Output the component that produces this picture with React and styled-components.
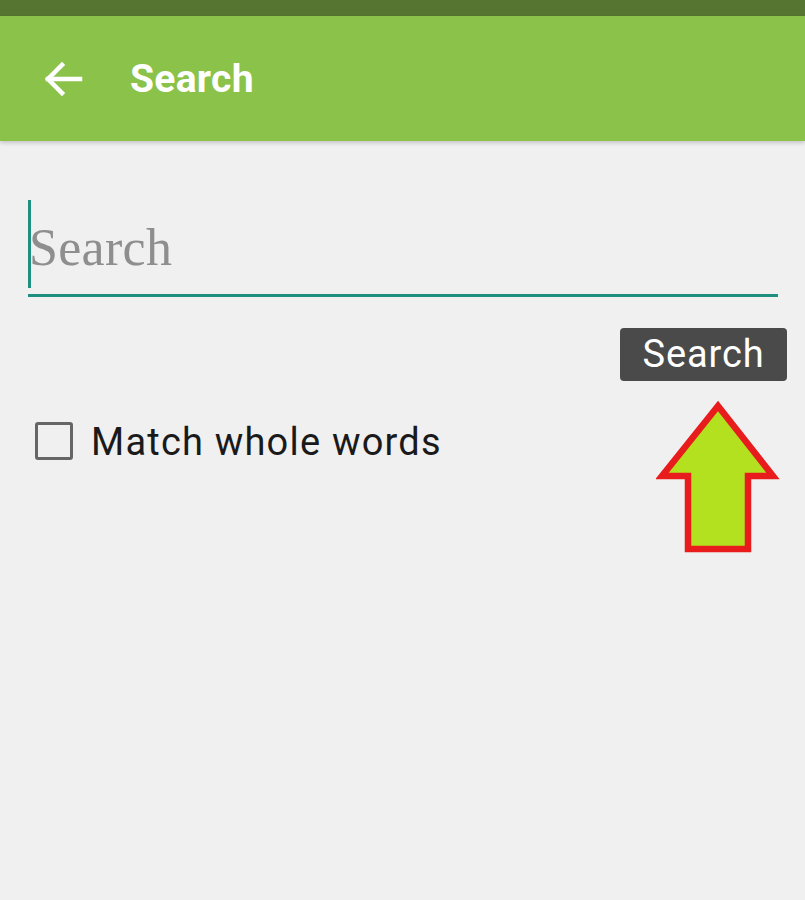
import React from "react";
import styled, { createGlobalStyle } from "styled-components";

const Global = createGlobalStyle`
  html, body { margin: 0; padding: 0; background: #f0f0f0; }
  body { font-family: Roboto, "Liberation Sans", sans-serif; }
  * { box-sizing: border-box; }
`;

const Screen = styled.div`
  position: relative;
  width: 805px;
  height: 900px;
  background: #f0f0f0;
  overflow: hidden;
`;

const StatusBar = styled.div`
  height: 16px;
  background: #557530;
`;

const Toolbar = styled.header`
  height: 125px;
  background: #8bc34a;
  display: flex;
  align-items: center;
  padding-left: 44px;
  gap: 46px;
  box-shadow: 0 2px 4px rgba(0, 0, 0, 0.18);
  position: relative;
  z-index: 1;
`;

const Title = styled.h1`
  margin: 0;
  color: #fff;
  font-family: Roboto, "Liberation Sans", sans-serif;
  font-weight: 700;
  font-size: 39px;
  letter-spacing: 0.3px;
  line-height: 1;
  margin-top: 2px;
`;

const Content = styled.main`
  display: flex;
  flex-direction: column;
  padding: 59px 27px 0 28px;
`;

const Field = styled.div`
  position: relative;
  border-bottom: 3px solid #1f8f7f;
  height: 97px;
`;

const Input = styled.input`
  width: 100%;
  height: 94px;
  border: none;
  background: transparent;
  outline: none;
  padding: 0 0 0 1px;
  font-family: "Liberation Serif", "DejaVu Serif", serif;
  font-size: 52px;
  letter-spacing: 0.3px;
  color: #333;
  &::placeholder { color: #8e8e8e; }
`;

const Caret = styled.span`
  position: absolute;
  left: 0;
  top: 0;
  width: 3px;
  height: 88px;
  background: #1f8f7f;
`;

const ButtonRow = styled.div`
  display: flex;
  justify-content: flex-end;
  margin-top: 31px;
  margin-right: -9px;
`;

const Button = styled.button`
  height: 53px;
  width: 167px;
  background: #4a4a4a;
  color: #fff;
  border: none;
  border-radius: 4px;
  font-family: Roboto, "Liberation Sans", sans-serif;
  font-size: 38px;
  letter-spacing: 0.9px;
  padding: 0;
  line-height: 53px;
`;

const CheckRow = styled.label`
  display: flex;
  align-items: center;
  gap: 18px;
  margin-top: 40px;
  margin-left: 7px;
`;

const Box = styled.span`
  width: 38px;
  height: 38px;
  border: 3.5px solid #666;
  border-radius: 3px;
  flex: none;
`;

const Label = styled.span`
  font-family: Roboto, "Liberation Sans", sans-serif;
  font-size: 38px;
  letter-spacing: 1.2px;
  color: #1a1a1a;
  line-height: 1;
  margin-top: 2px;
`;

const Pointer = styled.svg`
  position: absolute;
  left: 656px;
  top: 400px;
`;

export default function App() {
  return (
    <>
      <Global />
      <Screen>
        <StatusBar />
        <Toolbar>
          <svg width="40" height="36" viewBox="0 0 40 36" fill="none" stroke="#fff" strokeWidth="4.5" strokeLinecap="square">
            <path d="M4 18 H36" />
            <path d="M18 4 L4 18 L18 32" strokeLinejoin="miter" />
          </svg>
          <Title>Search</Title>
        </Toolbar>
        <Content>
          <Field>
            <Input placeholder="Search" readOnly />
            <Caret />
          </Field>
          <ButtonRow>
            <Button>Search</Button>
          </ButtonRow>
          <CheckRow>
            <Box />
            <Label>Match whole words</Label>
          </CheckRow>
        </Content>
        <Pointer width="125" height="160" viewBox="0 0 125 160">
          <polygon
            points="62,6 117,76 92,76 92,149 32,149 32,76 6,76"
            fill="#b3e01f"
            stroke="#e81c1c"
            strokeWidth="6.5"
            strokeLinejoin="miter"
          />
        </Pointer>
      </Screen>
    </>
  );
}
